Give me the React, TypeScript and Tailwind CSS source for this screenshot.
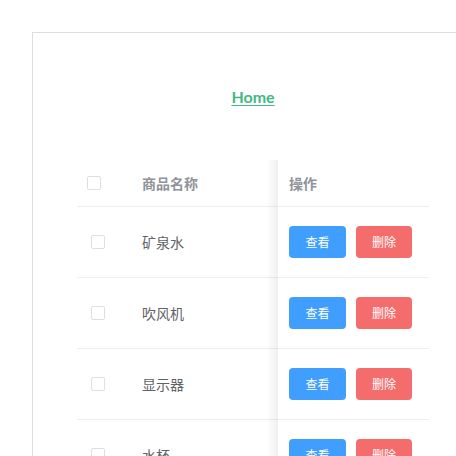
import React from "react";

const rows = ["矿泉水", "吹风机", "显示器", "水杯"];

function Checkbox({ className = "" }: { className?: string }) {
  return (
    <span
      className={`inline-block w-[14px] h-[14px] rounded-[2px] border border-[#dcdfe6] bg-white ${className}`}
    />
  );
}

export default function App() {
  return (
    <div
      className="w-[456px] h-[456px] overflow-hidden bg-white"
      style={{ fontFamily: '"Noto Sans CJK SC", sans-serif' }}
    >
      <div className="ml-8 mt-8 w-[442px] border border-[#dddddd] pb-10">
        <div className="h-[127px] pt-[51px] text-center">
          <a
            href="#"
            className="text-[16px] leading-6 font-bold text-[#42b983] underline underline-offset-2"
            style={{ fontFamily: "Lato, sans-serif" }}
          >
            Home
          </a>
        </div>

        <div className="relative mx-[44px] text-[14px]">
          {/* 表头 */}
          <div className="grid grid-cols-[65px_136px_151px] h-[47px] items-center border-b border-[#ebeef5] font-bold text-[#909399]">
            <div className="pl-[10px] flex items-center">
              <Checkbox />
            </div>
            <div>商品名称</div>
            <div className="pl-[11px]">操作</div>
          </div>

          {rows.map((name) => (
            <div
              key={name}
              className="grid grid-cols-[65px_136px_151px] h-[71px] items-center border-b border-[#ebeef5] text-[#606266]"
            >
              <div className="pl-[14px] flex items-center">
                <Checkbox />
              </div>
              <div>{name}</div>
              <div className="pl-[11px] flex gap-[10px]">
                <button className="w-[57px] h-[32px] rounded-[4px] bg-[#409eff] text-white text-[12px]">
                  查看
                </button>
                <button className="w-[56px] h-[32px] rounded-[4px] bg-[#f56c6c] text-white text-[12px]">
                  删除
                </button>
              </div>
            </div>
          ))}

          {/* 固定列阴影 */}
          <div className="absolute top-0 bottom-0 left-[189px] w-[12px] bg-gradient-to-r from-transparent to-black/[0.06] pointer-events-none" />
        </div>
      </div>
    </div>
  );
}
